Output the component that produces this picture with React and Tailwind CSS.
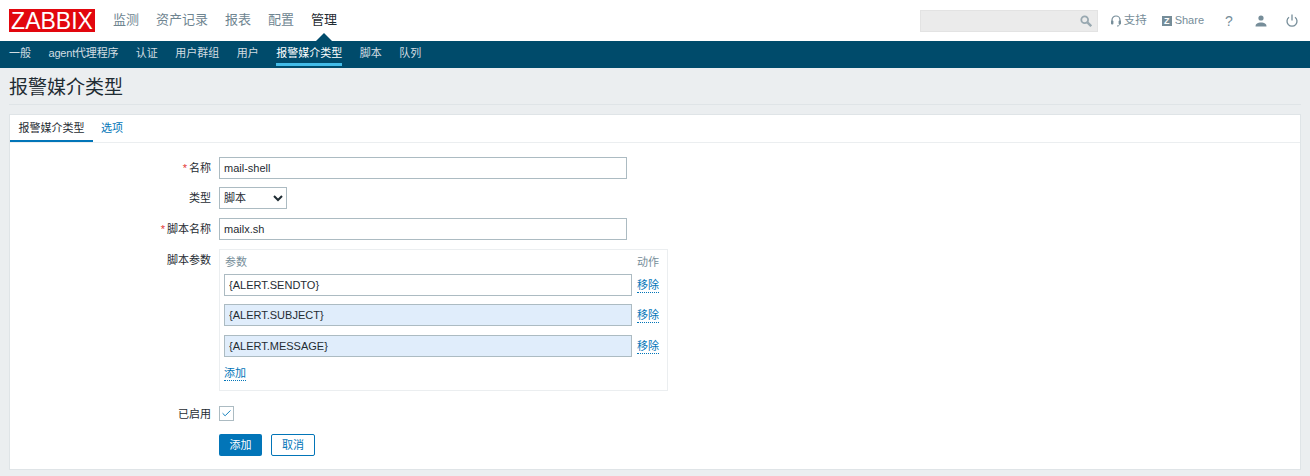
import React from "react";
import { Check } from "lucide-react";

const font = "font-['Liberation_Sans','Noto_Sans_CJK_SC',sans-serif]";

const mainMenu = ["监测", "资产记录", "报表", "配置", "管理"];
const subMenu = ["一般", "agent代理程序", "认证", "用户群组", "用户", "报警媒介类型", "脚本", "队列"];

const params = [
  { value: "{ALERT.SENDTO}", filled: false, gap: "" },
  { value: "{ALERT.SUBJECT}", filled: true, gap: "mt-[8px]" },
  { value: "{ALERT.MESSAGE}", filled: true, gap: "mt-[9px]" },
];

const Row = ({ label, required, className = "", children }) => (
  <div className={`flex gap-[8px] ${className}`}>
    <div className="w-[201px] text-right text-[11px] leading-[22px] text-[#1f2c33] shrink-0">
      {required && <span className="text-[#e33734] mr-[2px]">*</span>}
      {label}
    </div>
    {children}
  </div>
);

const TextInput = ({ value, filled, className = "" }) => (
  <input
    readOnly
    value={value}
    className={`block border border-[#acbbc2] px-[4px] text-[11px] text-[#1f2c33] outline-none ${filled ? "bg-[#e0edfb]" : "bg-white"} ${className}`}
  />
);

const DottedLink = ({ children, className = "" }) => (
  <a className={`text-[11px] leading-[14px] text-[#0275b8] border-b border-dotted border-[#0275b8] inline-block ${className}`}>{children}</a>
);

export default function App() {
  return (
    <div className={`${font} w-[1310px] h-[476px] overflow-hidden bg-[#ebeef0]`}>
      {/* top bar */}
      <header className="h-[41px] bg-white flex items-center pl-[9px] pr-[12px]">
        <div className="w-[86px] h-[23px] bg-[#e2070e] text-white text-[23px] leading-[24px] text-center">
          ZABBIX
        </div>
        <nav className="flex ml-[18px] gap-[17px] -mt-[1px]">
          {mainMenu.map((item, i) => (
            <a key={item} className={`relative text-[13px] leading-[20px] ${i === 4 ? "text-[#1f2c33]" : "text-[#6f8591]"}`}>
              {item}
              {i === 4 && (
                <span className="absolute left-[5px] top-[23px] w-0 h-0 border-x-[8px] border-x-transparent border-b-[8px] border-b-[#004b6b]" />
              )}
            </a>
          ))}
        </nav>
        <div className="ml-auto flex items-center text-[#768d99] text-[11px]">
          <div className="w-[178px] h-[22px] bg-[#ebebeb] border border-[#e3e3e3] flex items-center justify-end pr-[5px] mr-[13px]">
            <svg width="12" height="12" viewBox="0 0 12 12" fill="none" stroke="#98a8b0">
              <circle cx="4.7" cy="4.7" r="3.4" strokeWidth="1.8" />
              <path d="M7.4 7.4l3.8 3.8" strokeWidth="2.4" />
            </svg>
          </div>
          <a className="flex items-center gap-[3px] mr-[15px]">
            <svg width="10" height="12" viewBox="0 0 10 12" fill="none">
              <path d="M1 7V5a4 4 0 0 1 8 0v2" stroke="#768d99" strokeWidth="1.2" />
              <rect x="0" y="5.5" width="2.4" height="4" rx="1" fill="#768d99" />
              <rect x="7.6" y="5.5" width="2.4" height="4" rx="1" fill="#768d99" />
              <path d="M8.5 9.5c0 1-1 1.5-2.5 1.5" stroke="#768d99" />
            </svg>
            <span className="text-[11.5px]">支持</span>
          </a>
          <a className="flex items-center mr-[20px]">
            <span className="w-[10px] h-[10px] bg-[#768d99] text-white text-[9px] leading-[10px] font-bold text-center mr-[3px]">Z</span>
            Share
          </a>
          <span className="text-[14px] leading-none w-[10px] text-center mr-[21px]">?</span>
          <svg width="12" height="12" viewBox="0 0 12 12" className="mr-[19px]">
            <circle cx="6" cy="3" r="2.6" fill="#768d99" />
            <path d="M0.5 11.5c0-3 2.5-4 5.5-4s5.5 1 5.5 4z" fill="#768d99" />
          </svg>
          <svg width="12" height="13" viewBox="0 0 12 13" fill="none" stroke="#768d99" strokeWidth="1.3">
            <path d="M3 3.2a5 5 0 1 0 6 0" />
            <path d="M6 0.5v6" />
          </svg>
        </div>
      </header>

      {/* second level menu */}
      <nav className="h-[27px] bg-[#004b6b] flex pl-[9px] gap-[17.5px] text-[11px] text-[#d2dde2]">
        {subMenu.map((item) => (
          <a
            key={item}
            className={`h-[25px] leading-[25px] whitespace-nowrap ${item === "报警媒介类型" ? "text-white border-b-[3px] border-[#42bce8]" : ""} ${item === "agent代理程序" ? "tracking-[-0.2px]" : ""}`}
          >
            {item}
          </a>
        ))}
      </nav>

      {/* page title */}
      <div className="mx-[9px] h-[37px] border-b border-[#dfe4e7]">
        <h1 className="text-[19px] leading-[40px] font-normal text-[#1f2c33]">报警媒介类型</h1>
      </div>

      {/* form panel */}
      <section className="mt-[9px] mx-[9px] h-[356px] bg-white border border-[#dfe4e7]">
        <div className="h-[28px] border-b border-[#ebeef0] flex text-[11px]">
          <a className="w-[83px] h-[27px] text-center leading-[26px] text-[#1f2c33] border-b-[2px] border-[#0275b8]">报警媒介类型</a>
          <a className="ml-[8px] leading-[27px] text-[#0275b8]">选项</a>
        </div>

        <div className="pt-[14px]">
          <Row label="名称" required className="h-[22px]">
            <TextInput value="mail-shell" className="w-[408px] h-[22px]" />
          </Row>

          <Row label="类型" className="mt-[8px] h-[22px]">
            <select className="w-[68px] h-[22px] border border-[#acbbc2] bg-white text-[11px] text-[#1f2c33]">
              <option>脚本</option>
            </select>
          </Row>

          <Row label="脚本名称" required className="mt-[9px] h-[22px]">
            <TextInput value="mailx.sh" className="w-[408px] h-[22px]" />
          </Row>

          <Row label="脚本参数" className="mt-[9px]">
            <div className="w-[449px] h-[142px] border border-[#ebeef0] pl-[4px] pr-[4px]">
              <div className="flex justify-between pl-[1px] pr-[4px] text-[11px] leading-[16px] text-[#768d99] h-[24px] items-center">
                <span>参数</span>
                <span>动作</span>
              </div>
              {params.map((p) => (
                <div key={p.value} className={`flex items-start gap-[5px] h-[22px] ${p.gap}`}>
                  <TextInput value={p.value} filled={p.filled} className="w-[408px] h-[22px]" />
                  <DottedLink className="mt-[4px]">移除</DottedLink>
                </div>
              ))}
              <div className="mt-[3px]">
                <DottedLink>添加</DottedLink>
              </div>
            </div>
          </Row>

          <Row label="已启用" className="mt-[15px] h-[15px] items-center">
            <span className="w-[15px] h-[15px] border border-[#acbbc2] bg-white flex items-center justify-center">
              <Check size={11} strokeWidth={2} className="text-[#0275b8]" />
            </span>
          </Row>

          <div className="flex ml-[209px] mt-[13px] gap-[9px] text-[11px]">
            <button className="w-[43px] h-[22px] bg-[#0275b8] text-white rounded-[2px]">添加</button>
            <button className="w-[44px] h-[22px] bg-white text-[#0275b8] border border-[#0275b8] rounded-[2px]">取消</button>
          </div>
        </div>
      </section>
    </div>
  );
}
